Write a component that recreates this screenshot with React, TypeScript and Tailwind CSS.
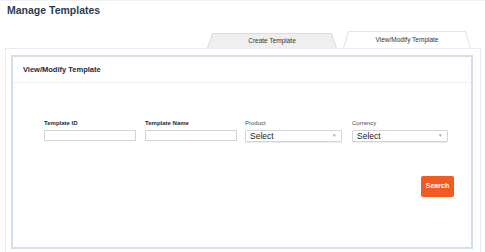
export default function App() {
  return (
    <div className="w-[485px] h-[252px] overflow-hidden bg-white font-['Liberation_Sans',Arial,sans-serif] border-t border-[#f1f1f1]">
      <h1 className="pl-[7px] pt-[1px] text-[10.5px] leading-[16px] font-bold text-[#2a3c54]">
        Manage Templates
      </h1>

      {/* Tabs */}
      <div className="flex justify-end items-end pr-[14px] mt-[13px] h-[17px] gap-[6px]">
        <div className="w-[130px] h-[15px] bg-[#dcdcdc] [clip-path:polygon(4%_0,96%_0,100%_100%,0_100%)] flex">
          <div className="flex-1 mx-[1px] mt-[1px] bg-[#efefef] [clip-path:polygon(4%_0,96%_0,100%_100%,0_100%)] flex items-center justify-center text-[6.5px] text-[#333]">
            Create Template
          </div>
        </div>
        <div className="w-[128px] h-[17px] bg-[#e4e4e4] [clip-path:polygon(4%_0,96%_0,100%_100%,0_100%)] flex">
          <div className="flex-1 mx-[1px] mt-[1px] bg-white [clip-path:polygon(4%_0,96%_0,100%_100%,0_100%)] flex items-center justify-center text-[6.5px] text-[#333]">
            View/Modify Template
          </div>
        </div>
      </div>

      {/* Outer box */}
      <div className="ml-[5px] w-[476px] h-[220px] border border-[#ebebeb] pt-[6px] pl-[5px]">
        <div className="w-[462px] h-[194px] border-2 border-[#d3e0ec] flex flex-col">
          <div className="h-[26px] flex items-center pl-[10px] border-b border-[#f0f0f0] text-[7.5px] font-bold text-[#1b2a3d]">
            View/Modify Template
          </div>

          <div className="flex pl-[31px] mt-[37px] gap-[9px]">
            <div className="flex flex-col w-[92px]">
              <label className="text-[6px] font-bold text-[#1b2a3d] leading-[7px] mb-[3px]">Template ID</label>
              <input className="h-[11px] border border-[#cfd4d9] bg-white outline-none" />
            </div>
            <div className="flex flex-col w-[92px]">
              <label className="text-[6px] font-bold text-[#1b2a3d] leading-[7px] mb-[3px]">Template Name</label>
              <input className="h-[11px] border border-[#cfd4d9] bg-white outline-none" />
            </div>
            <div className="flex flex-col w-[97px] ml-[-1px]">
              <label className="text-[6px] text-[#3a4a5c] leading-[7px] mb-[3px]">Product</label>
              <div className="h-[12px] border border-[#d2d6da] rounded-[1px] flex items-center justify-between pl-[4px] pr-[5px] shadow-[0_1px_1px_rgba(0,0,0,0.08)]">
                <span className="text-[8.5px] font-normal text-[#222]">Select</span>
                <span className="text-[5px] text-[#999]">▾</span>
              </div>
            </div>
            <div className="flex flex-col w-[96px] ml-[1px]">
              <label className="text-[6px] text-[#3a4a5c] leading-[7px] mb-[3px]">Currency</label>
              <div className="h-[12px] border border-[#d2d6da] rounded-[1px] flex items-center justify-between pl-[4px] pr-[5px] shadow-[0_1px_1px_rgba(0,0,0,0.08)]">
                <span className="text-[8.5px] font-normal text-[#222]">Select</span>
                <span className="text-[5px] text-[#999]">▾</span>
              </div>
            </div>
          </div>

          <div className="flex justify-end pr-[17px] mt-[34px]">
            <button className="w-[33px] h-[21px] rounded-[2px] bg-[#f15a22] text-white text-[7px] font-bold">
              Search
            </button>
          </div>
        </div>
      </div>
    </div>
  )
}
